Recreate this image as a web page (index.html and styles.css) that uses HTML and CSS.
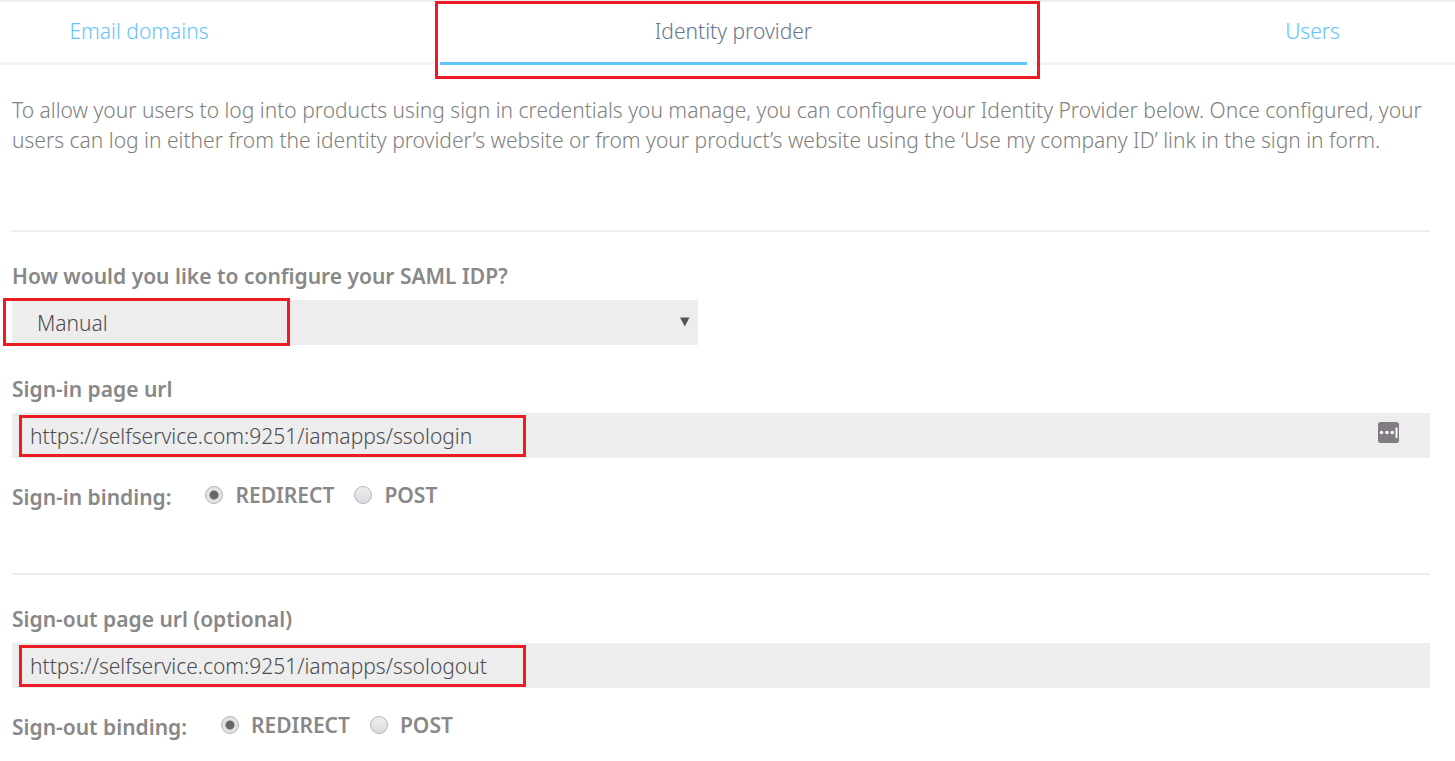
FILE: index.html
```html
<!DOCTYPE html>
<html lang="en">
<head>
    <meta charset="UTF-8">
    <meta name="viewport" content="width=device-width, initial-scale=1.0">
    <title>Identity provider</title>
    <link rel="stylesheet" href="styles.css">
</head>
<body>
    <nav class="tabs">
        <div class="tab-list">
            <a class="tab" href="#domains">Email domains</a>
            <a class="tab active" href="#idp" aria-current="page">Identity provider<span class="highlight highlight-tab"></span></a>
            <a class="tab" href="#users">Users</a>
        </div>
    </nav>

    <main class="container">
        <p class="intro">To allow your users to log into products using sign in credentials you manage, you can configure your Identity Provider below. Once configured, your users can log in either from the identity provider’s website or from your product’s website using the ‘Use my company ID’ link in the sign in form.</p>

        <form id="idpForm">
            <section class="section">
                <label class="title" for="config">How would you like to configure your SAML IDP?</label>
                <div class="field field-select">
                    <select id="config" name="config">
                        <option>Manual</option>
                    </select>
                    <svg class="arrow" width="10" height="10" viewBox="0 0 10 10"><path d="M0 0.500H9.500L4.800 9.500Z" fill="#55555c"/></svg>
                    <span class="highlight highlight-select"></span>
                </div>

                <label class="title" for="signin">Sign-in page url</label>
                <div class="field">
                    <input type="text" id="signin" name="signin" value="https://selfservice.com:9251/iamapps/ssologin">
                    <svg class="manager" width="21" height="21" viewBox="0 0 21 21">
                        <rect width="21" height="21" rx="2.500" fill="#827b83"/>
                        <g fill="#fff">
                            <circle cx="3.500" cy="10.500" r="1.700"/>
                            <circle cx="9" cy="10.500" r="1.700"/>
                            <circle cx="14.200" cy="10.500" r="1.700"/>
                            <rect x="17.500" y="5.500" width="2" height="10.500" rx="0.500"/>
                        </g>
                    </svg>
                    <span class="highlight highlight-input"></span>
                </div>
                <div class="binding" role="radiogroup" aria-labelledby="signinBinding">
                    <span class="binding-title" id="signinBinding">Sign-in binding:</span>
                    <label class="option"><input type="radio" name="signinBinding" checked>REDIRECT</label>
                    <label class="option"><input type="radio" name="signinBinding">POST</label>
                </div>
            </section>

            <section class="section">
                <label class="title" for="signout">Sign-out page url (optional)</label>
                <div class="field">
                    <input type="text" id="signout" name="signout" value="https://selfservice.com:9251/iamapps/ssologout">
                    <span class="highlight highlight-input"></span>
                </div>
                <div class="binding" role="radiogroup" aria-labelledby="signoutBinding">
                    <span class="binding-title" id="signoutBinding">Sign-out binding:</span>
                    <label class="option"><input type="radio" name="signoutBinding" checked>REDIRECT</label>
                    <label class="option"><input type="radio" name="signoutBinding">POST</label>
                </div>
            </section>
        </form>
    </main>
</body>
</html>
```
FILE: styles.css
```css
* {
    box-sizing: border-box;
}

body {
    margin: 0;
    font-family: "Noto Sans", "Open Sans", sans-serif;
    font-size: 21px;
    font-weight: 300;
    line-height: 30px;
    color: #808080;
    background-color: #fff;
}

.tabs {
    border-top: 2px solid #ededed;
    overflow-x: clip;
}

/* the outer tabs run past both edges of the window */
.tab-list {
    display: grid;
    grid-template-columns: 590fr 587fr 559fr;
    gap: 6px;
    margin: 0 -137px 0 -156px;
}

.tab {
    position: relative;
    padding: 14px 0 16px;
    border-bottom: 3px solid #f3f3f3;
    color: #64c3fc;
    text-align: center;
    text-decoration: none;
}

.tab.active {
    z-index: 1;
    border-bottom-color: #62c4ff;
    color: #67758f;
}

.highlight {
    position: absolute;
    border: 3px solid #ed1c24;
    pointer-events: none;
}

.highlight-tab {
    top: -1px;
    right: -13px;
    bottom: -17px;
    left: -5px;
}

.container {
    margin: 30px 25px 0 12px;
}

.intro {
    margin: 0 0 75px;
}

.section {
    border-top: 2px solid #ededed;
    padding: 29px 0 61px;
}

.section:last-child {
    padding-bottom: 0;
}

.title {
    display: block;
    margin-bottom: 9px;
    font-weight: 600;
    color: #888;
}

.field {
    position: relative;
    margin-bottom: 22px;
}

.field + .title {
    margin-top: 29px;
}

.field-select {
    width: 48.4%;
}

select,
input[type="text"] {
    display: block;
    width: 100%;
    height: 45px;
    margin: 0;
    padding: 0 18px;
    border: 0;
    border-radius: 0;
    background-color: #ededed;
    font: inherit;
    color: #4c4c52;
    appearance: none;
}

select {
    padding: 0 25px;
}

.arrow {
    position: absolute;
    top: 17px;
    right: 8px;
}

.manager {
    position: absolute;
    top: 9px;
    right: 31px;
}

.highlight-select {
    top: -2px;
    bottom: -1px;
    left: -9px;
    width: 287px;
}

.highlight-input {
    top: 2px;
    bottom: 1px;
    left: 7px;
    width: 507px;
}

.binding {
    display: flex;
    align-items: flex-start;
    gap: 20px;
    font-weight: 600;
    color: #888;
}

.binding-title {
    margin: 2px 14px 0 0;
}

.option {
    display: flex;
    align-items: center;
    gap: 12px;
}

input[type="radio"] {
    width: 18px;
    height: 18px;
    margin: 0;
    border: 1px solid #b4b4b4;
    border-radius: 50%;
    background: linear-gradient(#efefef, #d9dbe0);
    appearance: none;
}

input[type="radio"]:checked {
    background: radial-gradient(circle, #6a6664 4px, #e2e3e5 5px);
}
```
